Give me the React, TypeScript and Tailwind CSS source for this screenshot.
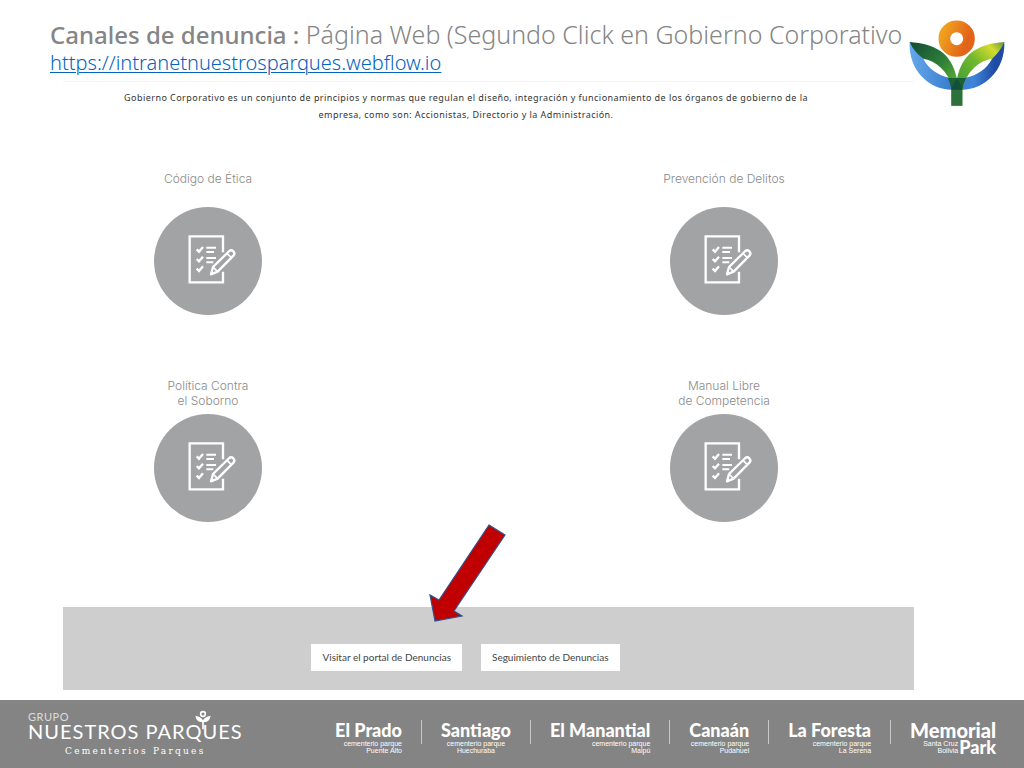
const DOCUMENTS = [
  ['Código de Ética'],
  ['Prevención de Delitos'],
  ['Política Contra', 'el Soborno'],
  ['Manual Libre', 'de Competencia'],
];

const PARKS = [
  { name: 'El Prado', city: 'Puente Alto', align: 'text-right' },
  { name: 'Santiago', city: 'Huechuraba', align: 'text-center' },
  { name: 'El Manantial', city: 'Maipú', align: 'text-right' },
  { name: 'Canaán', city: 'Pudahuel', align: 'text-right' },
  { name: 'La Foresta', city: 'La Serena', align: 'text-right' },
];

function FlowerLogo() {
  return (
    <svg className="w-[98px] h-[88px] shrink-0" viewBox="0 0 294 264" role="img" aria-label="Nuestros Parques">
      <defs>
        <linearGradient id="sun" x1="0" y1="0" x2="1" y2="0.4">
          <stop offset="0" stopColor="#f0a21e" />
          <stop offset="1" stopColor="#e2641a" />
        </linearGradient>
        <linearGradient id="leafLeft" x1="0" y1="0" x2="1" y2="1">
          <stop offset="0" stopColor="#0f4a34" />
          <stop offset="0.45" stopColor="#2f7d38" />
          <stop offset="0.8" stopColor="#5cb531" />
        </linearGradient>
        <linearGradient id="leafRight" x1="0" y1="1" x2="1" y2="0">
          <stop offset="0" stopColor="#3b9a38" />
          <stop offset="0.5" stopColor="#72b82e" />
          <stop offset="0.8" stopColor="#d5dc2c" />
          <stop offset="1" stopColor="#5c9440" />
        </linearGradient>
        <linearGradient id="bowl" x1="0" y1="0" x2="1" y2="0">
          <stop offset="0" stopColor="#65a8ea" />
          <stop offset="0.42" stopColor="#3a7fd0" />
          <stop offset="0.68" stopColor="#3f84d8" />
          <stop offset="0.9" stopColor="#1f4ba3" />
        </linearGradient>
      </defs>
      <path
        d="M5 66 C1 150 62 209 132 209 H162 C230 209 292 150 289 66 L252 116 C238 145 208 166 172 173 H124 C90 166 60 145 46 116 Z"
        fill="url(#bowl)"
      />
      <path d="M5 66 C80 72 130 96 147 176 L163 209 V257 H130 V190 C118 158 88 123 46 116 Q18 96 5 66 Z" fill="url(#leafLeft)" />
      <path d="M289 66 C214 72 164 96 147 176 V209 H163 C172 164 205 124 252 116 Q276 96 289 66 Z" fill="url(#leafRight)" />
      <path d="M120 174 H174 Q165 190 163 209 V257 H130 V209 Q128 190 120 174 Z" fill="#2c713c" />
      <path d="M120 174 H174 Q165 190 163 209 H130 Q128 190 120 174 Z" fill="#1c6038" />
      <path d="M147 176 Q160 192 163 209 H130 Q134 190 147 176 Z" fill="#12503a" />
      <circle cx="146" cy="56" r="37" fill="none" stroke="url(#sun)" strokeWidth="35" />
    </svg>
  );
}

function ChecklistIcon() {
  return (
    <svg
      className="w-[108px] h-[108px]"
      viewBox="0 0 324 324"
      fill="none"
      stroke="white"
      strokeWidth="7"
      aria-hidden="true"
    >
      <path d="M207 136 V88 H107 V226 H207 V194" />
      <path d="M128 127 L135 134 L147 120 M128 156 L135 163 L147 149 M128 185 L135 192 L147 178" />
      <path d="M157 122 H186 M157 135 H180 M157 153 H186 M157 166 H178" strokeWidth="6" />
      <path d="M171 202 L177 180 L226 132 Q232 127 238 133 Q244 139 239 145 L191 194 Z" strokeLinejoin="round" />
      <path d="M177 180 L191 194 M219 139 L232 152" strokeWidth="5" />
    </svg>
  );
}

function PointerArrow() {
  return (
    <svg className="absolute left-[117px] bottom-full mb-[21px] w-[78px] h-[100px]" viewBox="428 523 78 100" aria-hidden="true">
      <path
        d="M489 525 L505 535 L454 611 L462 616 L435 621 L430 595 L439 600 Z"
        fill="#c00000"
        stroke="#2f528f"
        strokeWidth="1.2"
      />
    </svg>
  );
}

function SmallFlower() {
  return (
    <svg className="absolute right-8 top-[10px] w-4 h-5" viewBox="0 0 48 60" fill="none" stroke="white" aria-hidden="true">
      <circle cx="24" cy="12" r="7" strokeWidth="5" />
      <path d="M1 17 Q4 37 24 37 Q44 37 47 17 Q29 20 24 31 Q19 20 1 17 Z" fill="white" stroke="none" />
      <path d="M24 34 V58" strokeWidth="5" />
    </svg>
  );
}

export default function App() {
  return (
    <div className="min-h-screen flex flex-col bg-white font-['Noto_Sans',sans-serif]">
      {/* Title */}
      <header className="flex justify-between pl-[50px] pr-[18px] pt-5 h-[81px]">
        <div>
          <h1 className="text-[25px] leading-7 font-light text-[#858585] whitespace-nowrap">
            <span className="text-2xl leading-7 font-medium">Canales de denuncia :</span> Página Web (Segundo Click en Gobierno Corporativo
          </h1>
          <a
            href="https://intranetnuestrosparques.webflow.io"
            className="block w-fit text-xl leading-7 font-light text-[#0563c1] underline decoration-1 underline-offset-2"
          >
            https://intranetnuestrosparques.webflow.io
          </a>
        </div>
        <FlowerLogo />
      </header>

      <main className="flex-1 pl-[63px] pr-[110px]">
        <div className="border-t border-[#f6f6f6] pr-[45px]">
          <p className="mx-auto max-w-[720px] pt-[7px] text-center text-[9px] leading-[17px] tracking-wider text-[#333]">
            Gobierno Corporativo es un conjunto de principios y normas que regulan el diseño, integración y funcionamiento de los órganos de gobierno de la
            empresa, como son: Accionistas, Directorio y la Administración.
          </p>

          <ul className="grid grid-cols-[160px_160px] justify-between gap-y-[63px] px-[65px] pt-12">
            {DOCUMENTS.map((lines) => (
              <li key={lines[0]}>
                <a href="#" className="flex flex-col items-center">
                  <span className="h-9 text-center font-['Inter',sans-serif] font-light text-xs leading-[15px] text-[#8a8a8a]">
                    {lines.map((line) => (
                      <span key={line} className="block">{line}</span>
                    ))}
                  </span>
                  <span className="rounded-full bg-[#a2a3a5]">
                    <ChecklistIcon />
                  </span>
                </a>
              </li>
            ))}
          </ul>
        </div>

        {/* Complaint portal */}
        <section className="mt-[85px] flex items-start justify-center gap-[19px] bg-[#cecece] pt-[37px] pb-[19px] pr-[46px]">
          <div className="relative flex">
            <button className="h-[27px] px-[11px] bg-white font-['Lato',sans-serif] text-[10px] text-[#444]">
              Visitar el portal de Denuncias
            </button>
            <PointerArrow />
          </div>
          <button className="h-[27px] px-[11px] bg-white font-['Lato',sans-serif] text-[10px] text-[#444]">
            Seguimiento de Denuncias
          </button>
        </section>
      </main>

      <footer className="flex items-start justify-between h-[68px] bg-[#848484] pl-7 pr-7 text-white">
        <div className="relative pt-[11px]">
          <SmallFlower />
          <p className="font-['Lato',sans-serif] text-[11px] leading-[11px] tracking-wider text-[#dcdcdc]">GRUPO</p>
          <p className="font-['Lato',sans-serif] text-xl leading-[18px] tracking-wider">NUESTROS PARQUES</p>
          <p className="pt-[3px] text-center font-['DejaVu_Serif',serif] text-[9px] leading-4 tracking-[0.25em]">Cementerios Parques</p>
        </div>
        <ul className="flex pt-5">
          {PARKS.map((park) => (
            <li key={park.name} className="mr-[19px] h-6 border-r border-[#c8c8c8] pr-[19px]">
              <div className={park.align}>
                <p className="font-['Lato',sans-serif] text-lg leading-5 font-black">{park.name}</p>
                <p className="font-['Liberation_Sans',sans-serif] text-[7px] leading-[7px]">cementerio parque</p>
                <p className="font-['Liberation_Sans',sans-serif] text-[7px] leading-[7px]">{park.city}</p>
              </div>
            </li>
          ))}
          <li className="text-right">
            <p className="font-['Lato',sans-serif] text-xl leading-5 font-black">Memorial</p>
            <div className="-mt-[3px] flex justify-end gap-px">
              <p className="pt-[3px] font-['Liberation_Sans',sans-serif] text-[7px] leading-[7px]">
                Santa Cruz
                <br />
                Bolivia
              </p>
              <p className="font-['Lato',sans-serif] text-lg leading-5 font-black">Park</p>
            </div>
          </li>
        </ul>
      </footer>
    </div>
  );
}
